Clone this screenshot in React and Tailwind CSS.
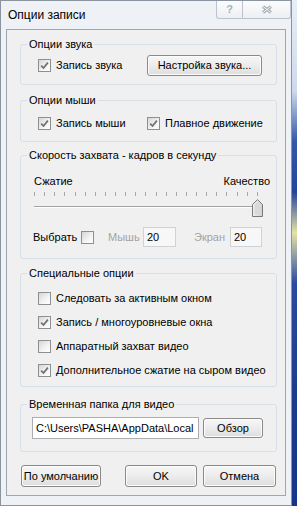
import React from "react";

const Check = ({ checked }) => (
  <span className="w-[13px] h-[13px] shrink-0 border border-[#8e8f8f] bg-[linear-gradient(135deg,#d6d6d6,#f4f4f4_60%,#ffffff)] flex items-center justify-center">
    {checked && (
      <svg width="9" height="9" viewBox="0 0 9 9">
        <path d="M1.2 4.6 L3.5 7 L7.9 1.6" stroke="#707070" strokeWidth="1.7" fill="none" />
      </svg>
    )}
  </span>
);

const CheckItem = ({ checked, label, className = "" }) => (
  <div className={`flex items-center gap-[5px] ${className}`}>
    <Check checked={checked} />
    <span className="whitespace-nowrap">{label}</span>
  </div>
);

const Button = ({ children, className = "" }) => (
  <div
    className={`flex items-center justify-center border border-[#8a8a8a] rounded-[3px] bg-[linear-gradient(to_bottom,#f7f7f7,#ececec_50%,#dedede)] shadow-[inset_0_0_0_1px_#fcfcfc] ${className}`}
  >
    {children}
  </div>
);

const Group = ({ title, className = "", children }) => (
  <fieldset className={`border border-[#d5dfe5] rounded-[3px] w-[257px] ml-[13px] ${className}`}>
    <legend className="ml-[6px] px-[2px] leading-[13px]">{title}</legend>
    {children}
  </fieldset>
);

const ticks = Array.from({ length: 23 });

export default function App() {
  return (
    <div className="w-[297px] h-[506px] flex bg-[#dfe6ef] font-['Liberation_Sans',Arial,sans-serif] text-[11px] text-black overflow-hidden">
      <div className="relative w-[292px] h-[506px] shrink-0 border border-[#8b949e] bg-[#eef1f5] flex flex-col items-start">
        {/* caption buttons */}
        <div className="absolute top-0 right-0 flex">
          <div className="w-[27px] h-[18px] flex items-center justify-center border border-t-0 border-[#bcc3cc] rounded-bl-[3px] bg-[linear-gradient(to_bottom,#fbfcfd,#eceff3)] text-[11px] font-bold text-[#aab0b8] leading-none">
            ?
          </div>
          <div className="w-[48px] h-[18px] flex items-center justify-center border border-t-0 border-l-0 border-[#bcc3cc] rounded-br-[3px] bg-[linear-gradient(to_bottom,#fbfcfd,#eceff3)]">
            <svg width="12" height="9" viewBox="0 0 12 9">
              <path d="M2 1.5 L10 7.5 M10 1.5 L2 7.5" stroke="#a2a9b1" strokeWidth="3" fill="none" />
              <path d="M2 1.5 L10 7.5 M10 1.5 L2 7.5" stroke="#f7f8fa" strokeWidth="1" fill="none" />
            </svg>
          </div>
        </div>

        <div className="h-[28px] pl-[7px] flex items-center text-[12px]">Опции записи</div>

        <div className="ml-[5px] w-[280px] h-[467px] border border-[#9ea6ae] bg-[#f0f0f0] flex flex-col">
          <Group title="Опции звука" className="mt-[8px] h-[47px]">
            <div className="pt-[4px] pl-[17px] flex items-center">
              <CheckItem checked label="Запись звука" className="w-[109px]" />
              <Button className="w-[115px] h-[21px]">Настройка звука...</Button>
            </div>
          </Group>

          <Group title="Опции мыши" className="mt-[9px] h-[48px]">
            <div className="pt-[8px] pl-[17px] flex items-center h-[24px]">
              <CheckItem checked label="Запись мыши" className="w-[109px]" />
              <CheckItem checked label="Плавное движение" />
            </div>
          </Group>

          <Group title="Скорость захвата - кадров в секунду" className="mt-[7px] h-[110px]">
            <div className="pt-[12px] pl-[13px] pr-[6px] flex justify-between leading-[14px]">
              <span>Сжатие</span>
              <span>Качество</span>
            </div>
            <div className="relative ml-[13px] mt-[2px] w-[225px] h-[27px]">
              <div className="absolute top-[2px] left-0 w-[224px] flex justify-between">
                {ticks.map((_, i) => (
                  <span key={i} className="w-px h-[4px] bg-[#a8a8a8]" />
                ))}
              </div>
              <div className="absolute top-[16px] left-0 w-[225px] h-[2px] border-t border-[#a3a3a3] border-b border-b-[#ffffff]" />
              <svg className="absolute top-[9px] left-[218px]" width="11" height="18" viewBox="0 0 11 18">
                <defs>
                  <linearGradient id="th" x1="0" y1="0" x2="1" y2="0">
                    <stop offset="0" stopColor="#f2f2f2" />
                    <stop offset="1" stopColor="#cfcfcf" />
                  </linearGradient>
                </defs>
                <path d="M0.5 5.5 L5.5 0.5 L10.5 5.5 L10.5 17.5 L0.5 17.5 Z" fill="url(#th)" stroke="#7a7a7a" />
                <path d="M2.5 6 L5.5 3 L8.5 6 L8.5 15.5 L2.5 15.5 Z" fill="#d9d9d9" />
              </svg>
            </div>
            <div className="mt-[10px] pl-[12px] flex items-center h-[20px]">
              <span className="w-[48px]">Выбрать</span>
              <Check />
              <span className="ml-[14px] w-[35px] text-[#a3a3a3]">Мышь</span>
              <div className="w-[33px] h-[20px] border border-[#cfd3d7] bg-[#f7f7f7] pl-[3px] flex items-center">20</div>
              <span className="ml-[18px] w-[36px] text-[#a3a3a3]">Экран</span>
              <div className="w-[32px] h-[20px] border border-[#cfd3d7] bg-[#f7f7f7] pl-[3px] flex items-center">20</div>
            </div>
          </Group>

          <Group title="Специальные опции" className="mt-[8px] h-[120px]">
            <div className="pt-[6px] pl-[17px] flex flex-col">
              <CheckItem label="Следовать за активным окном" className="h-[24px]" />
              <CheckItem checked label="Запись / многоуровневые окна" className="h-[24px]" />
              <CheckItem label="Аппаратный захват видео" className="h-[24px]" />
              <CheckItem checked label="Дополнительное сжатие на сыром видео" className="h-[24px]" />
            </div>
          </Group>

          <Group title="Временная папка для видео" className="mt-[11px] h-[54px]">
            <div className="pt-[6px] pl-[11px] flex items-center h-[28px]">
              <div className="w-[167px] h-[22px] border border-[#abadb3] bg-white pl-[3px] flex items-center overflow-hidden whitespace-nowrap">
                C:\Users\PASHA\AppData\Local
              </div>
              <Button className="ml-[4px] w-[60px] h-[20px]">Обзор</Button>
            </div>
          </Group>

          <div className="mt-[13px] ml-[14px] flex h-[22px]">
            <Button className="w-[80px] h-[22px]">По умолчанию</Button>
            <Button className="ml-[24px] w-[72px] h-[22px]">OK</Button>
            <Button className="ml-[6px] w-[73px] h-[22px]">Отмена</Button>
          </div>
        </div>
      </div>
      <div className="flex-1 h-full bg-[linear-gradient(to_bottom,#e8eef6_0%,#cdd9ec_18%,#3556a8_28%,#23449a_38%,#e4e2a8_46%,#2a4aa0_56%,#1b3a8c_80%,#16348a_100%)]" />
    </div>
  );
}
